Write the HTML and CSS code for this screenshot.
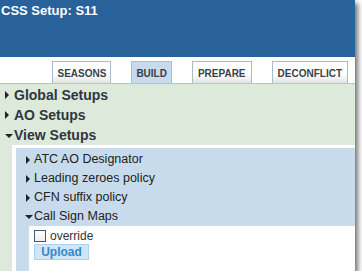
FILE: index.html
```html
<!DOCTYPE html>
<html lang="en">
<head>
  <meta charset="UTF-8" />
  <title>CSS Setup: S11</title>
  <link rel="stylesheet" href="styles.css">
</head>
<body>
  <div class="window">
    <header class="header">
      <h1 class="title">CSS Setup: S11</h1>
    </header>

    <nav class="tabs">
      <span class="tab">SEASONS</span>
      <span class="tab active">BUILD</span>
      <span class="tab">PREPARE</span>
      <span class="tab">DECONFLICT</span>
    </nav>

    <div class="tree">
      <div class="node collapsed">Global Setups</div>
      <div class="node collapsed">AO Setups</div>
      <div class="node open">View Setups</div>

      <div class="branch">
        <div class="subtree">
          <div class="leaf collapsed">ATC AO Designator</div>
          <div class="leaf collapsed">Leading zeroes policy</div>
          <div class="leaf collapsed">CFN suffix policy</div>
          <div class="leaf open">Call Sign Maps</div>

          <div class="panel">
            <label class="check"><span class="box"></span>override</label>
            <button class="upload" type="button">Upload</button>
          </div>
        </div>
      </div>
    </div>
  </div>
</body>
</html>
```

FILE: styles.css
```css
body {
  margin: 0;
  background: #fff;
  font-family: 'Liberation Sans', Arial, sans-serif;
}
.window {
  width: 355px;
  height: 271px;
  display: flex;
  flex-direction: column;
  background: #fff;
  box-shadow: 3px 3px 5px rgba(0, 0, 0, 0.55);
  overflow: hidden;
}
.header {
  height: 57px;
  background: #29619b;
  flex-shrink: 0;
}
.title {
  margin: 0;
  padding: 3px 0 0 1px;
  font-size: 13px;
  line-height: 15px;
  font-weight: bold;
  color: #fff;
}
.tabs {
  height: 26px;
  display: flex;
  justify-content: flex-end;
  align-items: flex-end;
  gap: 20px;
  padding-right: 7px;
  border-bottom: 1px solid #b4c3d2;
  flex-shrink: 0;
}
.tab {
  height: 21px;
  padding: 0 5px;
  border: 1px solid #aabbcc;
  border-bottom: none;
  background: linear-gradient(to bottom, #fff 60%, #e2e2e2);
  font-size: 10px;
  font-weight: bold;
  line-height: 23px;
  color: #3a3f48;
}
.tab:first-child, .tab.active {
  padding: 0 4px;
}
.tab.active {
  background: #c8dbed;
  border-color: #a7bed3;
}
.tree {
  flex: 1;
  display: flex;
  flex-direction: column;
  background: #dde9db;
  padding-top: 1px;
}
.node {
  position: relative;
  height: 20px;
  padding-left: 14px;
  font-size: 14px;
  font-weight: bold;
  line-height: 20px;
  color: #2f3640;
}
.node::before, .leaf::before {
  content: '';
  position: absolute;
  width: 0;
  height: 0;
}
.node.collapsed::before {
  left: 5px;
  top: 6px;
  border-left: 4px solid #222;
  border-top: 4px solid transparent;
  border-bottom: 4px solid transparent;
}
.node.open::before {
  left: 5px;
  top: 9px;
  border-top: 4px solid #222;
  border-left: 4px solid transparent;
  border-right: 4px solid transparent;
}
.branch {
  flex: 1;
  display: flex;
  margin-left: 12px;
  padding: 3px 0 0 4px;
  background: #fff;
}
.subtree {
  flex: 1;
  display: flex;
  flex-direction: column;
  background: #c8dbec;
  padding-top: 2px;
}
.leaf {
  position: relative;
  height: 19px;
  padding-left: 18px;
  font-size: 12.5px;
  line-height: 19px;
  color: #222;
}
.leaf.collapsed::before {
  left: 10px;
  top: 6px;
  border-left: 4px solid #222;
  border-top: 4px solid transparent;
  border-bottom: 4px solid transparent;
}
.leaf.open::before {
  left: 9px;
  top: 8px;
  border-top: 4px solid #222;
  border-left: 4px solid transparent;
  border-right: 4px solid transparent;
}
.panel {
  flex: 1;
  margin-left: 13px;
  padding: 3px 0 0 5px;
  background: #fff;
}
.check {
  display: flex;
  align-items: center;
  gap: 4px;
  height: 13px;
  font-size: 12px;
  color: #333;
}
.box {
  width: 10px;
  height: 10px;
  border: 1px solid #3d5a78;
  background: linear-gradient(to bottom, #fff, #eee);
}
.upload {
  display: block;
  margin-top: 2px;
  width: 55px;
  height: 16px;
  padding: 0;
  border: 1px solid #a9d3f2;
  background: #cfe6f7;
  font-family: 'Liberation Sans', Arial, sans-serif;
  font-size: 12px;
  font-weight: bold;
  color: #3388cc;
}
```
